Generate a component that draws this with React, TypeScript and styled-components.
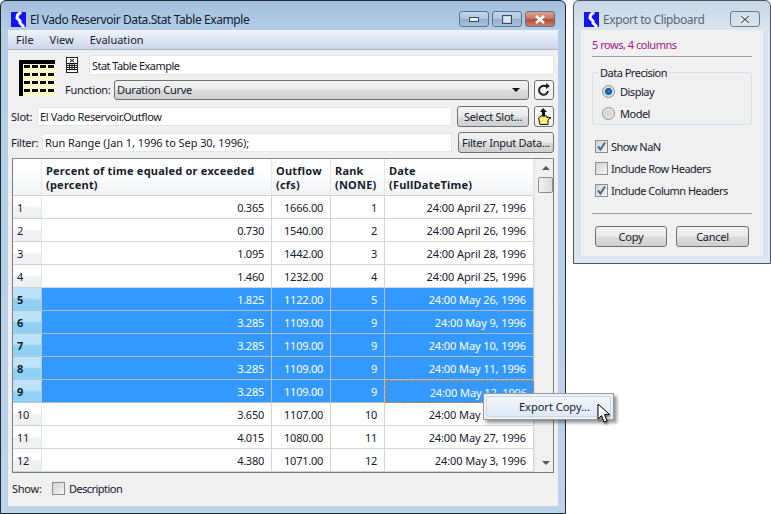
import React from "react"
import styled, { createGlobalStyle } from "styled-components"

const GlobalStyle = createGlobalStyle`
  html, body {
    margin: 0;
    padding: 0;
    background: #fff;
    font-family: "Noto Sans", "Open Sans", sans-serif;
    font-size: 11px;
    letter-spacing: -0.25px;
    color: #16202c;
  }
`

const Desktop = styled.div`
  position: relative;
  display: flex;
  align-items: flex-start;
  gap: 7px;
  width: 771px;
  height: 514px;
  overflow: hidden;
`

const Frame = styled.div<{ $w: number; $h: number; $inactive?: boolean }>`
  box-sizing: border-box;
  width: ${p => p.$w}px;
  height: ${p => p.$h}px;
  flex: none;
  display: flex;
  flex-direction: column;
  border: 1px solid ${p => (p.$inactive ? "#4a5560" : "#1c2a33")};
  border-radius: 6px 6px 0 0;
  background: ${p =>
    p.$inactive
      ? "linear-gradient(#c9d6e4 0, #dbe6f1 30px, #dbe6f1 100%)"
      : "linear-gradient(#a2bfdb 0, #b5cee6 30px, #bcd3ea 100%)"};
  padding: 0 7px 7px;
`

const TitleBar = styled.div`
  box-sizing: border-box;
  height: 29px;
  padding: 7px 0 0 3px;
  flex: none;
  display: flex;
  align-items: center;
  gap: 4px;
`

const TitleText = styled.span<{ $inactive?: boolean }>`
  font-size: 12px;
  color: ${p => (p.$inactive ? "#5b6672" : "#10202e")};
  flex: 1;
  letter-spacing: -0.42px;
`

const CapButtons = styled.div`
  display: flex;
  gap: 3px;
  margin-right: 3px;
`

const CapButton = styled.div<{ $kind?: "close" | "ghost" }>`
  box-sizing: border-box;
  width: 30px;
  height: 16px;
  display: flex;
  align-items: center;
  justify-content: center;
  border: 1px solid ${p => (p.$kind === "ghost" ? "#6c7c8c" : "#5a7690")};
  border-radius: 3px;
  background: ${p =>
    p.$kind === "ghost"
      ? "transparent"
      : p.$kind === "close"
        ? "linear-gradient(#dc9f94 0, #cf7666 48%, #b84a38 52%, #cc7a68 100%)"
        : "linear-gradient(#c4d6e8 0, #aec6de 48%, #92aecb 52%, #a8c2dc 100%)"};
`

const MenuBar = styled.div`
  height: 20px;
  flex: none;
  display: flex;
  align-items: center;
  gap: 16px;
  padding-left: 8px;
  letter-spacing: 0;
  background: linear-gradient(#f0f4fa, #ccd6ea);
  border-bottom: 1px solid #a9b5c4;
  box-sizing: border-box;
`

const Content = styled.div`
  flex: 1;
  min-height: 0;
  display: flex;
  flex-direction: column;
  background: #f0f0f0;
  padding: 5px 4px 0;
  box-sizing: border-box;
`

const Head = styled.div`
  display: flex;
  align-items: flex-start;
`

const BigIconBox = styled.div`
  width: 36px;
  height: 36px;
  margin: 5px 12px 0 7px;
  flex: none;
`

const HeadFields = styled.div`
  flex: 1;
  display: flex;
  flex-direction: column;
`

const HeadRow = styled.div<{ $mt?: number }>`
  display: flex;
  align-items: center;
  margin-top: ${p => p.$mt ?? 0}px;
`

const SmallIcon = styled.div`
  box-sizing: border-box;
  width: 12px;
  height: 16px;
  border: 1px solid #222;
  background: #fff;
  margin: 0 11px 0 -1px;
  display: flex;
  align-items: center;
  justify-content: center;
`

const Label = styled.span<{ $w: number; $ml?: number; $ls?: number }>`
  width: ${p => p.$w}px;
  margin-left: ${p => p.$ml ?? 0}px;
  padding-bottom: 1px;
  flex: none;
  white-space: nowrap;
  letter-spacing: ${p => p.$ls ?? -0.25}px;
`

const Field = styled.div<{ $w: number; $h?: number; $ls?: number }>`
  box-sizing: border-box;
  width: ${p => p.$w}px;
  height: ${p => p.$h ?? 20}px;
  flex: none;
  background: #fff;
  border: 1px solid #e3e6ea;
  border-radius: 2px;
  padding-left: 2px;
  display: flex;
  align-items: center;
  white-space: nowrap;
  letter-spacing: ${p => p.$ls ?? -0.25}px;
`

const Select = styled.div`
  box-sizing: border-box;
  width: 415px;
  height: 20px;
  margin-left: 2px;
  padding: 0 8px 1px 2px;
  display: flex;
  align-items: center;
  justify-content: space-between;
  border: 1px solid #707070;
  border-radius: 3px;
  background: linear-gradient(#f2f2f2 0, #ebebeb 48%, #dcdcdc 52%, #cfcfcf 100%);
`

const Arrow = styled.span<{ $color?: string }>`
  width: 0;
  height: 0;
  border-left: 4px solid transparent;
  border-right: 4px solid transparent;
  border-top: 4px solid ${p => p.$color ?? "#111"};
`

const Button = styled.div<{ $w: number; $h?: number; $ml?: number }>`
  box-sizing: border-box;
  width: ${p => p.$w}px;
  height: ${p => p.$h ?? 21}px;
  margin-left: ${p => p.$ml ?? 0}px;
  flex: none;
  display: flex;
  align-items: center;
  justify-content: center;
  border: 1px solid #707070;
  border-radius: 3px;
  white-space: nowrap;
  background: linear-gradient(#f2f2f2 0, #ebebeb 48%, #dddddd 52%, #cfcfcf 100%);
`

const IconButton = styled(Button)`
  background: linear-gradient(#fbfbfb, #f0f0f0);
`

const FormRow = styled.div<{ $mt: number }>`
  display: flex;
  align-items: center;
  margin: ${p => p.$mt}px 0 0 -1px;
  white-space: nowrap;
`

const TableBox = styled.div`
  box-sizing: border-box;
  width: 542px;
  height: 315px;
  margin-top: 5px;
  flex: none;
  display: flex;
  border: 1px solid #7d7d7d;
  border-top-color: #8a8a8a;
  background: #fff;
  overflow: hidden;
`

const Grid = styled.div`
  width: 521px;
  flex: none;
  overflow: hidden;
`

const GRID_COLS = "29px 230px 59px 54px 149px"

const HeaderRow = styled.div`
  display: grid;
  grid-template-columns: ${GRID_COLS};
  height: 37px;
`

const HeadCell = styled.div`
  box-sizing: border-box;
  padding: 5px 0 0 4px;
  font-weight: 700;
  line-height: 14px;
  letter-spacing: 0.22px;
  border-right: 1px solid #e6e6e6;
  border-bottom: 1px solid #d0d0d0;
  background: linear-gradient(#ffffff 0, #ffffff 35%, #f1f2f4 100%);
  white-space: nowrap;
`

const DataRow = styled.div`
  display: grid;
  grid-template-columns: ${GRID_COLS};
  height: 23px;
`

const RowHead = styled.div<{ $sel?: boolean }>`
  box-sizing: border-box;
  padding: 1px 0 0 4px;
  display: flex;
  align-items: center;
  font-weight: ${p => (p.$sel ? 700 : 400)};
  border-right: 1px solid ${p => (p.$sel ? "#b5c7d6" : "#e6e6e6")};
  border-bottom: 1px solid ${p => (p.$sel ? "#b5c7d6" : "#d0d0d0")};
  background: ${p =>
    p.$sel
      ? "linear-gradient(#bde3f8 0, #bde3f8 45%, #8fd0f5 55%, #8fd0f5 100%)"
      : "linear-gradient(#ffffff 0, #ffffff 45%, #eff0f2 55%, #eff0f2 100%)"};
`

const Cell = styled.div<{ $sel?: boolean; $current?: boolean; $ls?: number }>`
  box-sizing: border-box;
  padding: 1px 7px 0 0;
  display: flex;
  align-items: center;
  justify-content: flex-end;
  white-space: nowrap;
  overflow: hidden;
  letter-spacing: ${p => p.$ls ?? -0.25}px;
  color: ${p => (p.$sel ? "#fff" : "#16202c")};
  background: ${p => (p.$sel ? "#3399ff" : "#fff")};
  border-right: 1px solid ${p => (p.$sel ? "#b0bcc0" : "#d4d4d4")};
  border-bottom: 1px solid ${p => (p.$sel ? "#b0bcc0" : "#d4d4d4")};
  ${p => p.$current && "border: 1px dashed #e8801a; padding-right: 6px;"}
`

const ScrollBar = styled.div`
  flex: 1;
  display: flex;
  flex-direction: column;
  align-items: flex-end;
  background: #f0f0f0;
  border-left: 1px solid #e8e8e8;
`

const ScrollEnd = styled.div`
  width: 15px;
  height: 18px;
  flex: none;
  display: flex;
  align-items: center;
  justify-content: center;
`

const UpArrow = styled.span`
  width: 0;
  height: 0;
  border-left: 4px solid transparent;
  border-right: 4px solid transparent;
  border-bottom: 4px solid #555;
`

const Thumb = styled.div`
  box-sizing: border-box;
  width: 15px;
  height: 16px;
  border: 1px solid #8e8f8f;
  border-radius: 2px;
  background: linear-gradient(90deg, #f2f2f2, #dcdcdc);
`

const Spacer = styled.div`
  flex: 1;
`

const ShowRow = styled.div`
  display: flex;
  align-items: center;
  margin-top: 5px;
  height: 21px;
  gap: 4px;
`

const CheckBox = styled.span`
  box-sizing: border-box;
  width: 13px;
  height: 13px;
  flex: none;
  border: 1px solid #8e8f8f;
  background: linear-gradient(135deg, #d4d4d4, #f4f4f4);
  display: inline-flex;
  align-items: center;
  justify-content: center;
`

const DialogBody = styled(Content)`
  padding: 0 11px;
`

const Purple = styled.div`
  color: #a8108c;
  height: 26px;
  line-height: 30px;
  white-space: nowrap;
  letter-spacing: -0.48px;
`

const Divider = styled.div`
  height: 1px;
  background: #a0a0a0;
  flex: none;
`

const GroupBox = styled.div`
  box-sizing: border-box;
  position: relative;
  height: 53px;
  margin-top: 15px;
  border: 1px solid #d9dfe6;
  border-radius: 3px;
  padding: 10px 0 0 9px;
  display: flex;
  flex-direction: column;
  gap: 6px;
`

const GroupTitle = styled.span`
  position: absolute;
  top: -8px;
  left: 5px;
  background: #f0f0f0;
  padding: 0 2px;
  white-space: nowrap;
  letter-spacing: -0.5px;
`

const OptionRow = styled.div<{ $gap: number }>`
  display: flex;
  align-items: center;
  gap: ${p => p.$gap}px;
  height: 16px;
  white-space: nowrap;
  letter-spacing: -0.5px;
`

const Radio = styled.span<{ $on?: boolean }>`
  box-sizing: border-box;
  width: 13px;
  height: 13px;
  border-radius: 50%;
  border: 1px solid #8e8f8f;
  background: ${p =>
    p.$on
      ? "radial-gradient(circle, #2a8ad8 0, #0a5a9c 3px, #d8d8d8 4px, #f0f0f0 100%)"
      : "radial-gradient(circle, #d0d0d0 0, #f2f2f2 100%)"};
`

const Checks = styled.div`
  display: flex;
  flex-direction: column;
  gap: 6px;
  margin: 13px 0 15px 3px;
`

const DialogButtons = styled.div`
  display: flex;
  gap: 9px;
  margin: 12px 0 0 3px;
`

const PopupMenu = styled.div`
  position: absolute;
  left: 483px;
  top: 393px;
  box-sizing: border-box;
  width: 131px;
  height: 27px;
  padding: 2px;
  background: #f0f0f0;
  border: 1px solid #979797;
  box-shadow: 3px 3px 3px rgba(0, 0, 0, 0.4);
`

const PopupItem = styled.div`
  box-sizing: border-box;
  height: 21px;
  padding-left: 32px;
  display: flex;
  align-items: center;
  border: 1px solid #c4d7ee;
  border-radius: 3px;
  background: linear-gradient(#f2f6fc, #dfe9f6);
  white-space: nowrap;
  letter-spacing: 0;
`

const Cursor = styled.svg`
  position: absolute;
  left: 597px;
  top: 403px;
  filter: drop-shadow(1px 2px 1px rgba(0, 0, 0, 0.45));
`

const Logo = () => (
  <svg width="15" height="15" viewBox="0 0 15 15">
    <rect width="15" height="15" fill="#1414f0" />
    <path d="M10 0 L6.5 3 L6 6 L9 9 L9 11 L13 15" stroke="#fff" strokeWidth="3" fill="none" />
  </svg>
)

const TableGlyph = () => (
  <svg width="36" height="36" viewBox="0 0 36 36">
    <rect width="36" height="36" fill="#fdfdc4" />
    <rect width="36" height="4" fill="#000" />
    <rect width="4" height="36" fill="#000" />
    {[5, 13, 21, 29].map(y =>
      [5, 13, 21, 29].map(x => <rect key={`${x}-${y}`} x={x} y={y} width="6" height="3" fill="#000" />)
    )}
  </svg>
)

const SmallTable = () => (
  <svg width="10" height="12" viewBox="0 0 10 12">
    <path d="M3 0 L5 1.5 L3 3 M7 0 L5 1.5 L7 3" stroke="#111" fill="none" />
    <path d="M0 4.5 H10 M0 6.5 H10 M0 8.5 H10 M0 10.5 H10 M2.5 4 V11 M5 4 V11 M7.5 4 V11" stroke="#111" />
  </svg>
)

const Refresh = () => (
  <svg width="14" height="14" viewBox="0 0 14 14">
    <path d="M11 8 A4.5 4.5 0 1 1 8 3 H10" stroke="#222" strokeWidth="2" fill="none" />
    <path d="M9 0 L13 3 L9 6 Z" fill="#222" />
  </svg>
)

const HandUp = () => (
  <svg width="16" height="18" viewBox="0 0 16 18">
    <path d="M7 0 L11 4 H9 V8 H6 V4 H4 Z" fill="#111" />
    <path d="M2.5 10 L5 8 H11 V9.5 H15 L12 12 V16.5 H4 Z" fill="#f6ee6a" stroke="#111" />
  </svg>
)

const Check = () => (
  <svg width="11" height="11" viewBox="0 0 11 11">
    <path d="M2 5.5 L4.5 8.5 L9 1.5" stroke="#4a6a96" strokeWidth="2" fill="none" />
  </svg>
)

const CloseX: React.FC<{ ghost?: boolean }> = ({ ghost }) => (
  <svg width="12" height="9" viewBox="0 0 12 9">
    <path d="M2 1 L10 8 M10 1 L2 8" stroke="#fff" strokeWidth={ghost ? 3.4 : 2.6} />
    {ghost && <path d="M2 1 L10 8 M10 1 L2 8" stroke="#5b6672" strokeWidth="1.4" />}
  </svg>
)

interface RowData {
  id: number
  pct: string
  flow: string
  rank: number
  date: string
}

const rows: RowData[] = [
  { id: 1, pct: "0.365", flow: "1666.00", rank: 1, date: "24:00 April 27, 1996" },
  { id: 2, pct: "0.730", flow: "1540.00", rank: 2, date: "24:00 April 26, 1996" },
  { id: 3, pct: "1.095", flow: "1442.00", rank: 3, date: "24:00 April 28, 1996" },
  { id: 4, pct: "1.460", flow: "1232.00", rank: 4, date: "24:00 April 25, 1996" },
  { id: 5, pct: "1.825", flow: "1122.00", rank: 5, date: "24:00 May 26, 1996" },
  { id: 6, pct: "3.285", flow: "1109.00", rank: 9, date: "24:00 May 9, 1996" },
  { id: 7, pct: "3.285", flow: "1109.00", rank: 9, date: "24:00 May 10, 1996" },
  { id: 8, pct: "3.285", flow: "1109.00", rank: 9, date: "24:00 May 11, 1996" },
  { id: 9, pct: "3.285", flow: "1109.00", rank: 9, date: "24:00 May 12, 1996" },
  { id: 10, pct: "3.650", flow: "1107.00", rank: 10, date: "24:00 May 28, 1996" },
  { id: 11, pct: "4.015", flow: "1080.00", rank: 11, date: "24:00 May 27, 1996" },
  { id: 12, pct: "4.380", flow: "1071.00", rank: 12, date: "24:00 May 3, 1996" }
]

const App: React.FC = () => {
  return (
    <Desktop>
      <GlobalStyle />
      <Frame $w={566} $h={514}>
        <TitleBar>
          <Logo />
          <TitleText>El Vado Reservoir Data.Stat Table Example</TitleText>
          <CapButtons>
            <CapButton>
              <svg width="10" height="5"><rect x="0.5" y="0.5" width="9" height="4" fill="#eef3f8" stroke="#3a4a5a" /></svg>
            </CapButton>
            <CapButton>
              <svg width="10" height="9"><rect x="0.5" y="0.5" width="9" height="8" fill="#dbe6f1" stroke="#3a4a5a" strokeWidth="1.2" /></svg>
            </CapButton>
            <CapButton $kind="close">
              <CloseX />
            </CapButton>
          </CapButtons>
        </TitleBar>
        <MenuBar>
          <span>File</span>
          <span>View</span>
          <span>Evaluation</span>
        </MenuBar>
        <Content>
          <Head>
            <BigIconBox>
              <TableGlyph />
            </BigIconBox>
            <HeadFields>
              <HeadRow>
                <SmallIcon>
                  <SmallTable />
                </SmallIcon>
                <Field $w={465} $ls={-0.55}>Stat Table Example</Field>
              </HeadRow>
              <HeadRow $mt={5}>
                <Label $w={47} $ml={-2}>Function:</Label>
                <Select>
                  Duration Curve
                  <Arrow />
                </Select>
                <IconButton $w={20} $h={20} $ml={5}>
                  <Refresh />
                </IconButton>
              </HeadRow>
            </HeadFields>
          </Head>
          <FormRow $mt={6}>
            <Label $w={26}>Slot:</Label>
            <Field $w={415} $h={19} $ls={-0.38}>El Vado Reservoir.Outflow</Field>
            <Button $w={72} $ml={5}>Select Slot...</Button>
            <IconButton $w={20} $ml={5}>
              <HandUp />
            </IconButton>
          </FormRow>
          <FormRow $mt={5}>
            <Label $w={31}>Filter:</Label>
            <Field $w={410} $h={19} $ls={-0.08}>Run Range (Jan 1, 1996 to Sep 30, 1996);</Field>
            <Button $w={96} $ml={6}>Filter Input Data...</Button>
          </FormRow>
          <TableBox>
            <Grid>
              <HeaderRow>
                <HeadCell />
                <HeadCell>Percent of time equaled or exceeded<br />(percent)</HeadCell>
                <HeadCell>Outflow<br />(cfs)</HeadCell>
                <HeadCell>Rank<br />(NONE)</HeadCell>
                <HeadCell>Date<br />(FullDateTime)</HeadCell>
              </HeaderRow>
              {rows.map(r => {
                const sel = r.id >= 5 && r.id <= 9
                return (
                  <DataRow key={r.id}>
                    <RowHead $sel={sel}>{r.id}</RowHead>
                    <Cell $sel={sel}>{r.pct}</Cell>
                    <Cell $sel={sel}>{r.flow}</Cell>
                    <Cell $sel={sel}>{r.rank}</Cell>
                    <Cell $sel={sel} $current={r.id === 9} $ls={-0.1}>{r.date}</Cell>
                  </DataRow>
                )
              })}
            </Grid>
            <ScrollBar>
              <ScrollEnd><UpArrow /></ScrollEnd>
              <Thumb />
              <Spacer />
              <ScrollEnd><Arrow $color="#555" /></ScrollEnd>
            </ScrollBar>
          </TableBox>
          <ShowRow>
            <Label $w={36}>Show:</Label>
            <CheckBox />
            <Label $w={70} $ls={-0.55}>Description</Label>
          </ShowRow>
        </Content>
      </Frame>
      <Frame $w={198} $h={264} $inactive>
        <TitleBar>
          <Logo />
          <TitleText $inactive>Export to Clipboard</TitleText>
          <CapButtons>
            <CapButton $kind="ghost">
              <CloseX ghost />
            </CapButton>
          </CapButtons>
        </TitleBar>
        <DialogBody>
          <Purple>5 rows, 4 columns</Purple>
          <Divider />
          <GroupBox>
            <GroupTitle>Data Precision</GroupTitle>
            <OptionRow $gap={5}><Radio $on />Display</OptionRow>
            <OptionRow $gap={5}><Radio />Model</OptionRow>
          </GroupBox>
          <Checks>
            <OptionRow $gap={3}><CheckBox><Check /></CheckBox>Show NaN</OptionRow>
            <OptionRow $gap={3}><CheckBox />Include Row Headers</OptionRow>
            <OptionRow $gap={3}><CheckBox><Check /></CheckBox>Include Column Headers</OptionRow>
          </Checks>
          <Divider />
          <DialogButtons>
            <Button $w={72}>Copy</Button>
            <Button $w={73}>Cancel</Button>
          </DialogButtons>
        </DialogBody>
      </Frame>
      <PopupMenu>
        <PopupItem>Export Copy...</PopupItem>
      </PopupMenu>
      <Cursor width="16" height="22" viewBox="0 0 16 22">
        <path d="M1 1 L1 16 L4.5 12.5 L7 19 L10 18 L7.5 11.5 L12.5 11.5 Z" fill="#fff" stroke="#000" strokeWidth="1" />
      </Cursor>
    </Desktop>
  )
}

export default App
